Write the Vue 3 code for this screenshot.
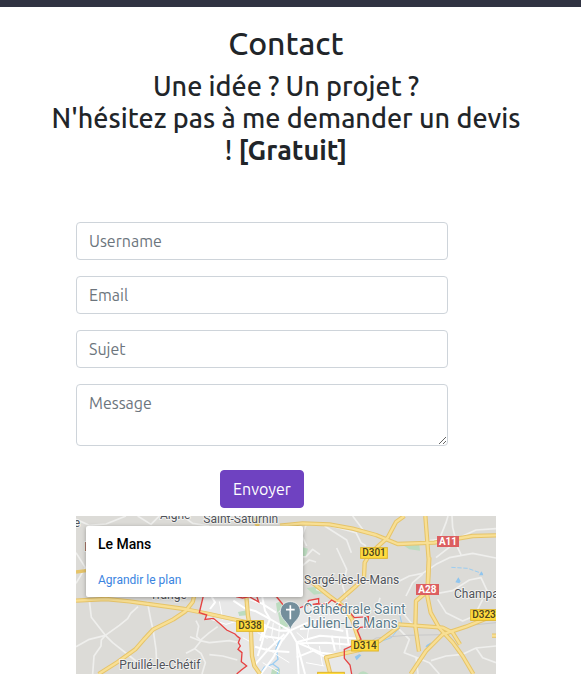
<script setup>
import { reactive } from 'vue'

const form = reactive({ username: '', email: '', subject: '', message: '' })

const mainRoads = [
  'M0 254 L90 249 L160 256 L325 279 L400 294 L510 318',
  'M356 234 L350 258 L328 286 L292 310 L232 340 L204 370 L178 400 L125 438 L68 474',
  'M510 230 L516 300 L525 350 L528 420 L535 450 L552 474',
  'M612 29 L680 22 L760 25 L830 38 L900 57 L965 84 L1075 80 L1190 60 L1260 58',
  'M1048 0 L1058 130 L1054 240 L1064 290 L1090 336 L1130 379 L1160 420 L1192 474',
  'M1060 124 L1055 225 L1020 255 L1018 330 L1029 406',
  'M985 0 L960 18 L935 65 L885 110 L866 140 L864 185 L840 210 L780 262',
  'M690 185 L760 240 L800 270 L828 310 L848 370',
  'M967 325 L1100 335 L1130 350 L1152 385',
  'M1260 296 L1170 332 L1100 355 L1050 405 L1004 474',
  'M968 332 L910 375 L850 402 L750 424 L757 450 L763 474',
  'M1248 359 H1260'
]
</script>

<template>
  <div class="page">
    <div class="topbar"></div>
    <header class="intro">
      <h2>Contact</h2>
      <h3>Une idée ? Un projet ?<br />N'hésitez pas à me demander un devis<br />! <strong>[Gratuit]</strong></h3>
    </header>
    <main class="content">
      <form class="form" @submit.prevent>
        <input v-model="form.username" type="text" placeholder="Username" aria-label="Username" />
        <input v-model="form.email" type="email" placeholder="Email" aria-label="Email" />
        <input v-model="form.subject" type="text" placeholder="Sujet" aria-label="Sujet" />
        <textarea v-model="form.message" rows="2" placeholder="Message" aria-label="Message"></textarea>
        <button type="submit">Envoyer</button>
      </form>

      <section class="map" aria-label="Le Mans">
        <svg viewBox="0 0 1260 474" preserveAspectRatio="xMidYMin slice">
          <rect width="1260" height="474" fill="#dcdbd7" />

          <!-- city area -->
          <path fill="#e8e8e8" d="M385 230 L370 290 L392 297 L387 310 L412 307 L452 342 L477 354 L492 367 L487 392 L497 417 L497 437 L512 450 L482 474 H827 L822 447 L805 427 V400 L827 390 L855 370 L844 344 L852 334 L877 332 V302 L822 285 L802 272 L767 252 L730 265 V250 L697 254 V267 L652 277 L612 257 L580 230 Z" />

          <!-- parks -->
          <g fill="#bcdcc0">
            <path d="M680 94 L696 98 L690 120 L676 125Z" />
            <path d="M692 216 L735 210 L742 232 L714 236Z" />
            <path d="M985 90 L1030 86 L1032 104 L1000 100Z" />
            <path d="M486 288 L512 283 V298 L490 300Z" />
            <path d="M600 262 L614 256 L624 270 L604 290Z" />
            <path d="M606 290 L640 276 L640 330 L615 338Z" />
            <path d="M846 474 Q860 458 878 474Z" />
            <path d="M588 460 L612 458 V474 H585Z" />
          </g>

          <!-- water -->
          <g fill="none" stroke="#9bcdf2" stroke-width="4">
            <path d="M612 370 L600 398 L606 430 L590 444 L565 454 L555 470" />
            <path d="M590 444 L608 457 L604 474" />
            <path d="M1126 154 L1175 157 L1220 173" stroke-width="3" stroke-dasharray="13 5" />
            <path d="M972 300 L978 325 L946 365 L910 378 L890 397 L846 408" stroke-width="3" />
          </g>
          <path fill="#90c5ee" d="M1147 184 L1154 196 L1150 202 L1138 199Z M1217 166 L1222 178 L1209 178Z M1052 387 L1066 379 L1060 391 L1048 394Z M836 422 L850 414 L856 418 L842 433Z" />

          <!-- minor roads -->
          <g fill="none" stroke="#efefed" stroke-width="5" stroke-linejoin="round">
            <path d="M0 10 L40 28 L90 24 L150 0 M185 0 L225 25 L250 0 M320 0 L350 22 L400 30" />
            <path d="M0 202 L28 155 L0 110 M40 254 L46 304 L88 358 L76 372 L75 390 L54 420 L50 474" />
            <path d="M0 392 L40 370 L88 358 L130 328 L155 308 L164 292 L186 272 M88 358 L110 380 L180 435" />
            <path d="M214 257 L224 310 L232 345 L240 400 L242 440" />
            <path d="M360 314 L368 330 L362 362 L375 374 L356 398 L330 412 M356 398 L375 412 L388 440 L378 474" />
            <path d="M342 362 L372 374 L400 350 L425 332 M372 374 L400 380 L460 374 L490 380 M400 416 L440 420 L484 432" />
            <path d="M690 28 L678 60 L692 90 M746 30 L812 72 L826 110 M640 172 L655 125 L690 122 L710 100 L732 116" />
            <path d="M678 150 L700 132 L720 138 M782 96 L812 160 L800 210 L812 250 M720 220 L760 236" />
            <path d="M760 28 L840 50 L855 80 L870 90 M830 0 L870 53" />
            <path d="M1116 0 L1110 20 L1090 70 L1028 78 M1260 38 L1200 42 L1160 60 L1130 86 L1080 125" />
            <path d="M1128 0 L1130 34 L1145 95 L1155 116 M960 200 L1000 180 L1040 172 L1080 145 L1120 125 L1190 112 L1260 126" />
            <path d="M990 240 L1010 200 L1040 174 M1075 234 L1130 224 L1180 192 L1215 185 L1236 230" />
            <path d="M912 245 L900 290 L930 276 L970 278 L1010 326" />
            <path d="M1085 250 L1110 290 L1160 315 L1195 300 L1220 250" />
            <path d="M970 340 L1000 370 L985 410 L1020 424 L1026 474 M1020 424 L1060 440 L1090 474" />
            <path d="M1065 434 L1110 420 L1160 415 L1200 396 L1260 390 M1200 396 L1220 425 L1260 440" />
          </g>
          <path fill="none" stroke="#c9c9c9" stroke-width="3" d="M850 398 L900 366 L990 358 L1100 356 L1180 328 L1260 320" />

          <!-- city streets -->
          <g fill="none" stroke="#fff" stroke-width="6" stroke-linejoin="round">
            <path d="M402 234 L417 259 L402 279 M472 254 L505 276 L540 286 L582 309 L642 344" />
            <path d="M557 234 L567 284 L582 309 M520 250 L557 262 L600 290" />
            <path d="M582 309 L567 345 L557 384 L545 420 M567 324 L552 374" />
            <path d="M564 329 L610 344 L642 344 M557 359 L625 369 M537 392 L582 404 L640 408" />
            <path d="M642 344 L617 375 L592 424 L555 474 M625 355 L577 400 L537 446" />
            <path d="M642 344 L662 379 L668 474 M662 379 L687 474 M662 379 L735 410 L800 418" />
            <path d="M642 344 L690 322 L732 319 M662 379 L732 359 L790 364 L850 368" />
            <path d="M672 339 L745 334 L802 345 M672 382 L750 380 L822 386" />
            <path d="M662 424 L712 404 L750 424 M767 359 L777 404 M812 340 L818 386" />
          </g>
          <g fill="none" stroke="#fff" stroke-width="3">
            <path d="M592 320 L587 360 L602 390 M610 330 L608 366 M570 396 L640 440 M545 350 L575 368 M532 330 L560 340" />
            <path d="M662 349 L690 374 L705 404 M700 322 L692 380 M730 390 L740 450 M790 364 L792 400" />
            <path d="M405 310 L450 325 L485 315 M430 256 L440 310 M500 365 L528 380 M560 440 L610 470 M690 440 L745 450" />
          </g>

          <!-- main roads -->
          <g fill="none" stroke="#e6c469" stroke-width="13" stroke-linejoin="round">
            <path v-for="road in mainRoads" :key="road" :d="road" />
          </g>
          <g fill="none" stroke="#f8df94" stroke-width="7" stroke-linejoin="round">
            <path v-for="road in mainRoads" :key="road" :d="road" />
          </g>
          <path fill="none" stroke="#e6c469" stroke-width="10" d="M0 168 L30 164 M525 0 L545 30 L550 0" />

          <!-- city limits -->
          <path fill="none" stroke="#e64343" stroke-width="4" d="M382 240 L370 290 L392 297 L387 310 L412 307 L430 322 L452 342 L477 354 L485 362 L492 367 L487 380 L493 390 L486 400 L498 410 L496 437 L505 444 L512 450 L496 462 L482 474 M480 242 L500 246 L520 242 L548 258 L542 240 M600 240 L626 272 L652 265 L667 277 L695 267 L697 254 L728 248 V262 L710 265 L755 263 L767 252 L802 272 L822 272 L818 285 L835 305 L877 302 V332 L852 334 L844 344 L855 370 L827 390 L805 400 V427 L822 447 L827 474" />

          <!-- place names -->
          <g class="place">
            <text x="382" y="20">Saint-Saturnin</text>
            <text x="252" y="8">Aigné</text>
            <text x="-7" y="32">e</text>
            <text x="25" y="106">L</text>
            <text x="222" y="249">Trangé</text>
            <text x="130" y="459">Pruillé-le-Chétif</text>
            <text x="684" y="204">Sargé-lès-le-Mans</text>
            <text x="1134" y="246">Champagné</text>
          </g>

          <!-- road numbers -->
          <g class="road">
            <g fill="#ffdb3e" stroke="#dfb52c" stroke-width="3">
              <rect x="854" y="95" width="80" height="32" />
              <rect x="482" y="314" width="80" height="32" />
              <rect x="827" y="373" width="80" height="32" />
              <rect x="1184" y="281" width="80" height="32" />
              <rect x="725" y="469" width="80" height="32" />
            </g>
            <text x="894" y="121">D301</text>
            <text x="522" y="340">D338</text>
            <text x="867" y="399">D314</text>
            <text x="1224" y="307">D323</text>
            <g fill="#dc5f61">
              <rect x="1083" y="60" width="66" height="33" />
              <rect x="1020" y="204" width="69" height="33" />
            </g>
            <text class="motorway" x="1116" y="86">A11</text>
            <text class="motorway" x="1054" y="230">A28</text>
          </g>

          <!-- cathedral marker -->
          <path fill="#748f9c" stroke="#fff" stroke-width="2" d="M643 257 C624 257 613 271 613 287 C613 309 637 318 643 341 C649 318 673 309 673 287 C673 271 662 257 643 257Z" />
          <path fill="none" stroke="#fff" stroke-width="5" d="M643 268 V310 M630 281 H656" />
          <g class="landmark">
            <text x="682" y="293">Cathédrale Saint</text>
            <text x="682" y="335">Julien-Le Mans</text>
          </g>
        </svg>
        <div class="card">
          <strong>Le Mans</strong>
          <a href="#">Agrandir le plan</a>
        </div>
      </section>
    </main>
  </div>
</template>

<style>
body {
  margin: 0;
  background: #fff;
}
</style>

<style scoped>
* {
  box-sizing: border-box;
}
.page {
  color: #212529;
  font-family: Ubuntu, "Noto Sans", sans-serif;
  font-size: 16px;
  line-height: 24px;
}
.topbar {
  height: 7px;
  background: #303342;
}
.intro {
  padding: 17px 9px 56px 0;
  text-align: center;
}
h2,
h3 {
  margin: 0;
  font-weight: 500;
}
h2 {
  margin-bottom: 8px;
  font-size: 32px;
  line-height: 38px;
}
h3 {
  font-size: 27px;
  line-height: 32px;
}
.content {
  padding: 0 85px 0 76px;
}
.form {
  display: flex;
  flex-direction: column;
  gap: 16px;
  padding-right: 48px;
}
input,
textarea {
  display: block;
  width: 100%;
  margin: 0;
  padding: 6px 12px;
  border: 1px solid #ced4da;
  border-radius: 4px;
  background: #fff;
  color: #495057;
  font: inherit;
}
input {
  height: 38px;
}
textarea {
  height: 62px;
  resize: vertical;
}
::placeholder {
  color: #6c757d;
  opacity: 1;
}
button {
  align-self: center;
  margin: 8px 0;
  padding: 6px 12px;
  border: 1px solid #6f42c1;
  border-radius: 4px;
  background: #6f42c1;
  color: #fff;
  font: inherit;
}
.map {
  position: relative;
  overflow: hidden;
  font-family: Roboto, sans-serif;
}
.map svg {
  display: block;
  width: 100%;
}
.place {
  fill: #50535a;
  stroke: #f4f4f2;
  stroke-width: 5px;
  paint-order: stroke;
  font-size: 36px;
}
.road {
  fill: #4a421c;
  font-size: 30px;
  font-weight: 500;
  text-anchor: middle;
}
.motorway {
  fill: #fff;
  font-weight: 700;
}
.landmark {
  fill: #5e7d8b;
  stroke: #fff;
  stroke-width: 5px;
  paint-order: stroke;
  font-size: 42px;
}
.card {
  position: absolute;
  top: 10px;
  left: 10px;
  display: flex;
  flex-direction: column;
  gap: 16px;
  width: 217px;
  padding: 8px 12px 7px;
  border-radius: 2px;
  background: #fff;
  box-shadow: 0 1px 4px rgba(0, 0, 0, 0.3);
}
.card strong {
  color: #000;
  font-size: 14px;
  font-weight: 500;
  line-height: 20px;
}
.card a {
  color: #3a84df;
  font-size: 12px;
  line-height: 20px;
  text-decoration: none;
}
</style>
